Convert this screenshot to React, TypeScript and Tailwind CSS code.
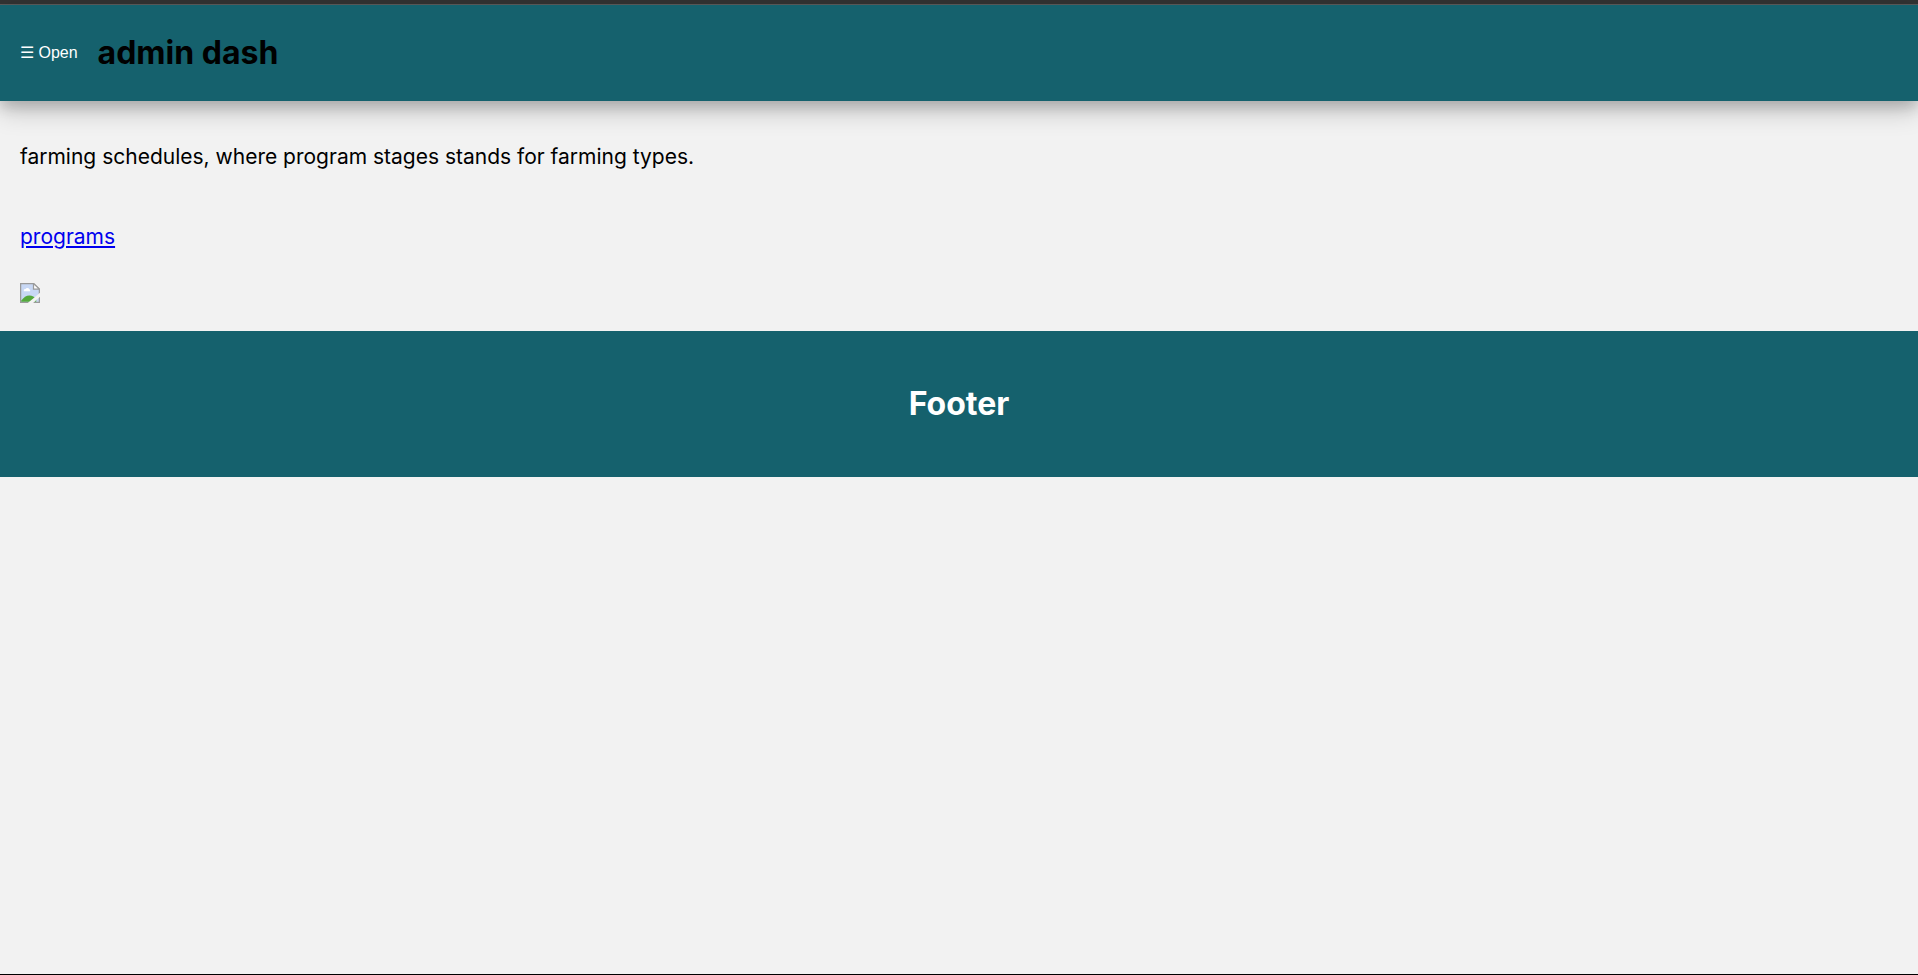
function MissingImage() {
  return (
    <svg role="img" aria-label="Image" viewBox="0 0 16 16" className="block size-5">
      <path d="M0.5 0.5H11L15.5 5V15.5H0.5Z" fill="#c8d8f5" stroke="#9a9a9a" />
      <path d="M3 6.5a1.3 1.3 0 0 1 1.3-1.6a1.8 1.8 0 0 1 3.2 0a1.1 1.1 0 0 1 0.5 1.6Z" fill="#fff" />
      <path d="M1 15V14C3 11.5 5 10 7.5 10C10 10 11.5 11 13 13V15Z" fill="#55a93c" />
      <path d="M10.8 0.5V4.8H15.5Z" fill="#fff" stroke="#9a9a9a" />
      <path d="M16 7.8V11L10.5 16H6.2Z" fill="#f2f2f2" />
    </svg>
  );
}

export default function App() {
  return (
    <div className="flex min-h-screen flex-col border-b border-black bg-[#f2f2f2] font-['Inter',sans-serif] text-black">
      <div className="h-[5px] border-b border-[#5c5c5c] bg-[#333333]" />
      <header className="flex h-24 items-center gap-5 bg-[#15616d] px-5 shadow-[0_10px_24px_rgba(0,0,0,0.2),0_6px_12px_rgba(0,0,0,0.15)]">
        <button type="button" className="font-['Liberation_Sans',sans-serif] text-base text-white">
          ☰ Open
        </button>
        <h1 className="text-[32px] leading-10 font-bold">admin dash</h1>
      </header>
      <main className="flex flex-col items-start px-5 pt-10 pb-7 text-[21px] leading-8">
        <p>farming schedules, where program stages stands for farming types.</p>
        <a href="#programs" className="mt-12 text-[#0000ee] underline">
          programs
        </a>
        <div className="mt-[30px]">
          <MissingImage />
        </div>
      </main>
      <footer className="bg-[#15616d] px-5 py-[53px] text-center text-white">
        <h2 className="text-[32px] leading-10 font-bold">Footer</h2>
      </footer>
    </div>
  );
}
